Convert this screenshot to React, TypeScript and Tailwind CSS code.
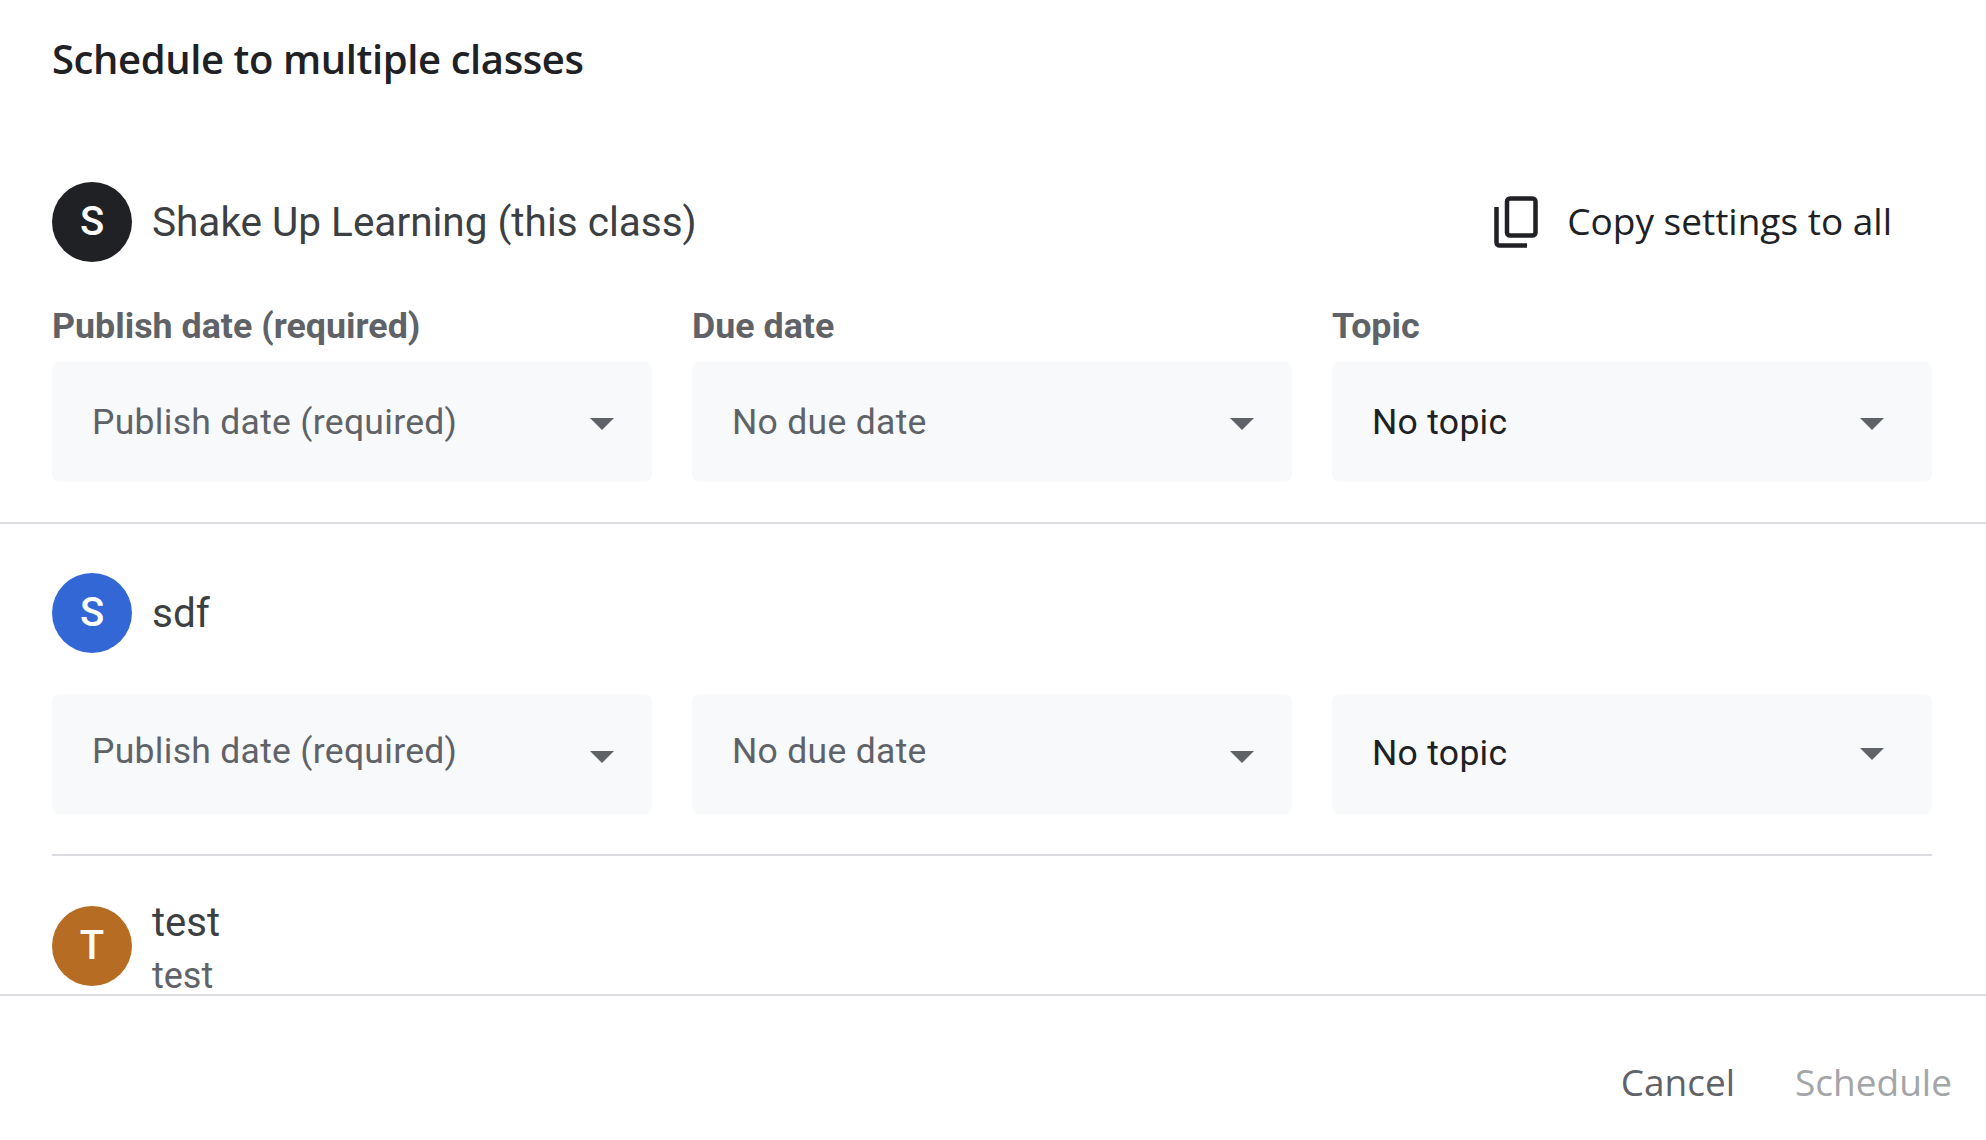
const roboto = "font-['Roboto',sans-serif]";
const sans = "font-['Open_Sans',sans-serif]";

function Avatar({ letter, color, className = '' }: { letter: string; color: string; className?: string }) {
  return (
    <div className={`flex h-[80px] w-[80px] shrink-0 items-center justify-center rounded-full text-[40px] font-medium leading-none text-white ${color} ${className}`}>
      {letter}
    </div>
  );
}

function Select({
  text,
  textClass = 'text-[#5f6368]',
  labelShift = 'translate-y-[1px]',
  arrowShift = 'translate-y-[2px]',
  padRight = 'pr-[38px]',
}: {
  text: string;
  textClass?: string;
  labelShift?: string;
  arrowShift?: string;
  padRight?: string;
}) {
  return (
    <div className={`flex h-[120px] min-w-0 items-center justify-between rounded-[8px] bg-[#f8f9fa] pl-[40px] ${padRight}`}>
      <span className={`text-[35.5px] leading-none tracking-[0.3px] ${textClass} ${labelShift}`}>{text}</span>
      <svg viewBox="0 0 10 5" className={`h-[12px] w-[24px] ${arrowShift}`}>
        <path d="M0 0 L10 0 L5 5 Z" fill="#5f6368" />
      </svg>
    </div>
  );
}

function CopyIcon() {
  return (
    <svg viewBox="0 0 44 52" className="h-[52px] w-[44px]" fill="none" stroke="#202124" strokeWidth="4.5">
      <rect x="13" y="2.5" width="28.5" height="37" rx="3" />
      <path d="M2.5 11 V46.5 a3 3 0 0 0 3 3 H33" />
    </svg>
  );
}

export default function App() {
  return (
    <div className={`flex h-[1140px] w-[1986px] flex-col overflow-hidden bg-white ${roboto}`}>
      <div className={`h-[182px] shrink-0 pl-[52px] pt-[34px] text-[40px] font-semibold leading-[50px] tracking-[-0.4px] text-[#202124] ${sans}`}>
        Schedule to multiple classes
      </div>

      <div className="h-[814px] shrink-0 overflow-hidden border-b-2 border-[#dadce0]">
        <div className="border-b-2 border-[#dadce0] pb-[40px] pl-[52px] pr-[54px]">
          <div className="flex h-[80px] items-center justify-between">
            <div className="flex items-center gap-[20px]">
              <Avatar letter="S" color="bg-[#202124]" />
              <span className="text-[40.5px] text-[#3c4043]">Shake Up Learning (this class)</span>
            </div>
            <div className="flex items-center gap-[29px] pr-[40px]">
              <CopyIcon />
              <span className={`-translate-y-[1px] text-[37px] font-medium text-[#202124] ${sans}`}>Copy settings to all</span>
            </div>
          </div>
          <div className="mt-[41px] grid grid-cols-3 gap-[40px] text-[35.8px] font-bold leading-[46px] text-[#5f6368]">
            <div>Publish date (required)</div>
            <div>Due date</div>
            <div>Topic</div>
          </div>
          <div className="mt-[13px] grid grid-cols-3 gap-[40px]">
            <Select text="Publish date (required)" />
            <Select text="No due date" />
            <Select text="No topic" textClass="text-[#202124]" padRight="pr-[48px]" />
          </div>
        </div>

        <div className="pl-[52px] pr-[54px] pt-[49px]">
          <div className="flex items-center gap-[20px]">
            <Avatar letter="S" color="bg-[#3367d6]" />
            <span className="text-[40.5px] text-[#3c4043]">sdf</span>
          </div>
          <div className="mt-[41px] grid grid-cols-3 gap-[40px] border-b-2 border-[#dadce0] pb-[40px]">
            <Select text="Publish date (required)" labelShift="-translate-y-[2px]" arrowShift="translate-y-[3px]" />
            <Select text="No due date" labelShift="-translate-y-[2px]" arrowShift="translate-y-[3px]" />
            <Select text="No topic" textClass="text-[#202124]" labelShift="" arrowShift="" padRight="pr-[48px]" />
          </div>
          <div className="mt-[41px] flex items-start gap-[20px]">
            <Avatar letter="T" color="bg-[#b76c24]" className="mt-[9px]" />
            <div className="flex flex-col">
              <span className="text-[40px] leading-[52px] text-[#3c4043]">test</span>
              <span className="mt-[9px] text-[36px] leading-[36px] text-[#5f6368]">test</span>
            </div>
          </div>
        </div>
      </div>

      <div className={`flex flex-1 items-center justify-end gap-[60px] pr-[34px] pt-[28px] text-[37px] font-medium ${sans}`}>
        <span className="text-[#5f6368]">Cancel</span>
        <span className="text-[#a3a5a8]">Schedule</span>
      </div>
    </div>
  );
}
